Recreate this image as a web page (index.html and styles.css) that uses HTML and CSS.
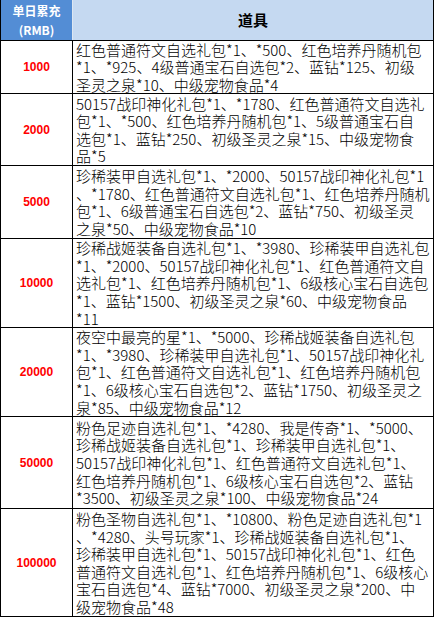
FILE: index.html
```html
<!DOCTYPE html>
<html lang="zh-CN">
<head>
<meta charset="utf-8">
<title>单日累充</title>
<link rel="stylesheet" href="styles.css">
</head>
<body>
<table class="reward-table">
  <colgroup><col class="col-amount"><col class="col-items"></colgroup>
  <thead>
    <tr class="row-head">
      <th class="head-amount">单日累充<br>(RMB)</th>
      <th class="head-items">道具</th>
    </tr>
  </thead>
  <tbody>
    <tr class="r1">
      <td class="amount">1000</td>
      <td class="items">红色普通符文自选礼包*1、*500、红色培养丹随机包<br>*1、*925、4级普通宝石自选包*2、蓝钻*125、初级<br>圣灵之泉*10、中级宠物食品*4</td>
    </tr>
    <tr class="r2">
      <td class="amount">2000</td>
      <td class="items">50157战印神化礼包*1、*1780、红色普通符文自选礼<br>包*1、*500、红色培养丹随机包*1、5级普通宝石自<br>选包*1、蓝钻*250、初级圣灵之泉*15、中级宠物食<br>品*5</td>
    </tr>
    <tr class="r3">
      <td class="amount">5000</td>
      <td class="items">珍稀装甲自选礼包*1、*2000、50157战印神化礼包*1<br>、*1780、红色普通符文自选礼包*1、红色培养丹随机<br>包*1、6级普通宝石自选包*2、蓝钻*750、初级圣灵<br>之泉*50、中级宠物食品*10</td>
    </tr>
    <tr class="r4">
      <td class="amount">10000</td>
      <td class="items">珍稀战姬装备自选礼包*1、*3980、珍稀装甲自选礼包<br>*1、*2000、50157战印神化礼包*1、红色普通符文自<br>选礼包*1、红色培养丹随机包*1、6级核心宝石自选包<br>*1、蓝钻*1500、初级圣灵之泉*60、中级宠物食品<br>*11</td>
    </tr>
    <tr class="r5">
      <td class="amount">20000</td>
      <td class="items">夜空中最亮的星*1、*5000、珍稀战姬装备自选礼包<br>*1、*3980、珍稀装甲自选礼包*1、50157战印神化礼<br>包*1、红色普通符文自选礼包*1、红色培养丹随机包<br>*1、6级核心宝石自选包*2、蓝钻*1750、初级圣灵之<br>泉*85、中级宠物食品*12</td>
    </tr>
    <tr class="r6">
      <td class="amount">50000</td>
      <td class="items">粉色足迹自选礼包*1、*4280、我是传奇*1、*5000、<br>珍稀战姬装备自选礼包*1、珍稀装甲自选礼包*1、<br>50157战印神化礼包*1、红色普通符文自选礼包*1、<br>红色培养丹随机包*1、6级核心宝石自选包*2、蓝钻<br>*3500、初级圣灵之泉*100、中级宠物食品*24</td>
    </tr>
    <tr class="r7">
      <td class="amount">100000</td>
      <td class="items">粉色圣物自选礼包*1、*10800、粉色足迹自选礼包*1<br>、*4280、头号玩家*1、珍稀战姬装备自选礼包*1、<br>珍稀装甲自选礼包*1、50157战印神化礼包*1、红色<br>普通符文自选礼包*1、红色培养丹随机包*1、6级核心<br>宝石自选包*4、蓝钻*7000、初级圣灵之泉*200、中<br>级宠物食品*48</td>
    </tr>
  </tbody>
</table>
</body>
</html>
```

FILE: styles.css
```css
html, body {
  margin: 0;
  padding: 0;
  background: #fff;
}

.reward-table {
  border-collapse: collapse;
  table-layout: fixed;
  width: 433px;
  font-family: "Noto Sans CJK SC", sans-serif;
}

.col-amount { width: 72px; }
.col-items { width: 361px; }

.reward-table th,
.reward-table td {
  border: 1px solid #000;
  padding: 0;
}

.row-head { height: 40px; }

.reward-table th {
  border-top: hidden;
  font-weight: bold;
  vertical-align: middle;
  text-align: center;
}

.head-amount {
  background: #538dd5;
  color: #fff;
  font-size: 12px;
  line-height: 19px;
  border-left: hidden;
  border-right: 1px solid #dce6f1 !important;
}

.head-items {
  background: #c5d9f1;
  color: #000;
  font-size: 15px;
  line-height: 20px;
  border-left: 1px solid #dce6f1 !important;
}

.amount {
  text-align: center;
  vertical-align: middle;
  color: #ff0000;
  font-family: "Liberation Sans", Arial, sans-serif;
  font-weight: bold;
  font-size: 12px;
}

.items {
  text-align: left;
  vertical-align: middle;
  padding-left: 3px !important;
  white-space: nowrap;
  font-size: 15px;
  font-weight: 300;
  line-height: 17.6px;
  color: #000;
}

.r1 { height: 53px; }
.r2 { height: 72px; }
.r3 { height: 73px; }
.r4 { height: 89px; }
.r5 { height: 89px; }
.r6 { height: 92px; }
.r7 { height: 108px; }
```
